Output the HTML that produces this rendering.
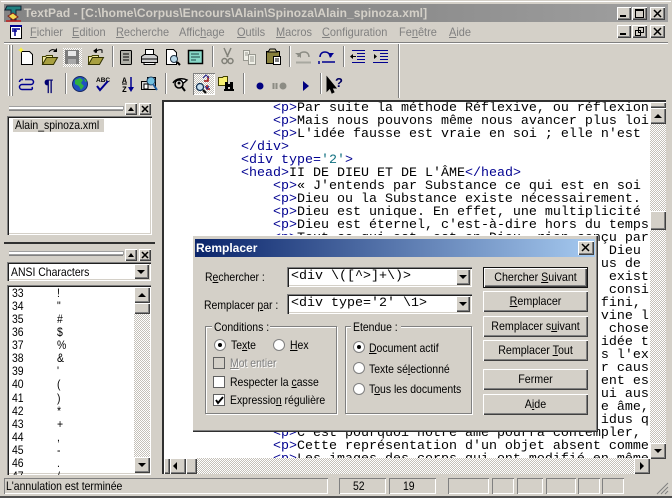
<!DOCTYPE html>
<html><head><meta charset="utf-8"><title>TextPad</title>
<style>
html,body{margin:0;padding:0;background:#d4d0c8}
#w{position:relative;width:672px;height:498px;overflow:hidden;background:#d4d0c8;font:12px/14px "Liberation Sans",sans-serif;color:#000}
#w div,#w span.t{position:absolute}
.t{white-space:pre;transform:scaleX(.87);transform-origin:0 0}
.n{transform:none}
.c{text-align:center;transform:scaleX(.89);transform-origin:50% 0}
.r{box-shadow:inset 1px 1px #fff,inset -1px -1px #404040,inset -2px -2px #808080,inset 2px 2px #d4d0c8;background:#d4d0c8}
.s{box-shadow:inset 1px 1px #808080,inset 2px 2px #202020,inset -1px -1px #fff,inset -2px -2px #d4d0c8;background:#fff}
.p{box-shadow:inset 1px 1px #808080,inset -1px -1px #fff}
.d{background:repeating-conic-gradient(#c4c0b8 0 25%,#fff 0 50%) 0 0/2px 2px}
.m{color:#808080;transform:scaleX(.915)}
.g{border:1px solid #808080;box-shadow:1px 1px #fff,inset 1px 1px #fff}
#e{left:164px;top:102px;width:486px;height:356px;overflow:hidden;background:#fff}
#e pre{position:absolute;left:-3px;top:0;margin:0;font:13.34px/13px "Liberation Mono",monospace;color:#000}
#e b{font-weight:normal;color:#000090}
#e i{font-style:normal;color:#107080}
.lb{background:linear-gradient(90deg,#0a246a,#a6caf0)}
</style></head><body>
<div id="w">
<div style="left:0;top:0;width:672px;height:1px;background:#d4d0c8"></div>
<div style="left:1px;top:1px;width:670px;height:1px;background:#fff"></div>
<div style="left:0;top:496px;width:672px;height:2px;background:#505050"></div>
<div style="left:4px;top:4px;width:664px;height:18px;background:linear-gradient(90deg,#858585,#8c8c8c 60%,#a0a0a0)"></div>
<span class="t n" style="left:24px;top:6px;font-weight:bold;font-size:12px;color:#d4d0c8;letter-spacing:.06px">TextPad - [C:\home\Corpus\Encours\Alain\Spinoza\Alain_spinoza.xml]</span>
<span class="t m" style="left:30px;top:25px"><u>F</u>ichier</span>
<span class="t m" style="left:72px;top:25px"><u>E</u>dition</span>
<span class="t m" style="left:116px;top:25px"><u>R</u>echerche</span>
<span class="t m" style="left:179px;top:25px">Affic<u>h</u>age</span>
<span class="t m" style="left:237px;top:25px"><u>O</u>utils</span>
<span class="t m" style="left:276px;top:25px"><u>M</u>acros</span>
<span class="t m" style="left:322px;top:25px"><u>C</u>onfiguration</span>
<span class="t m" style="left:399px;top:25px">Fe<u>n</u>être</span>
<span class="t m" style="left:449px;top:25px"><u>A</u>ide</span>
<div class="r" style="left:617px;top:7px;width:14px;height:13px"></div>
<div class="r" style="left:632px;top:7px;width:15px;height:13px"></div>
<div class="r" style="left:650px;top:7px;width:15px;height:13px"></div>
<div class="r" style="left:617px;top:25px;width:14px;height:13px"></div>
<div class="r" style="left:632px;top:25px;width:15px;height:13px"></div>
<div class="r" style="left:650px;top:25px;width:15px;height:13px"></div>
<div style="left:4px;top:42px;width:664px;height:1px;background:#808080"></div>
<div style="left:4px;top:43px;width:664px;height:1px;background:#fff"></div>
<div style="left:398px;top:44px;width:1px;height:54px;background:#808080"></div>
<div style="left:399px;top:44px;width:1px;height:54px;background:#fff"></div>
<div class="d" style="left:63px;top:48px;width:19px;height:19px"></div>
<div class="d" style="left:193px;top:73px;width:22px;height:22px;box-shadow:inset 1px 1px #808080,inset -1px -1px #fff"></div>

<div style="left:9px;top:106px;width:114px;height:2px;border:1px solid #a0a0a0;border-left:0;background:#fff"></div>
<div style="left:9px;top:110px;width:114px;height:1px;background:#808080"></div>
<div class="r" style="left:125px;top:103px;width:12px;height:12px"></div>
<div class="r" style="left:139px;top:103px;width:12px;height:12px"></div>
<div class="s" style="left:7px;top:116px;width:145px;height:119px"></div>
<div style="left:13px;top:119px;width:91px;height:13px;background:#d4d0c8"></div>
<span class="t" style="left:15px;top:118px">Alain_spinoza.xml</span>
<div style="left:4px;top:242px;width:151px;height:2px;background:#303030"></div>
<div style="left:9px;top:251px;width:114px;height:2px;border:1px solid #a0a0a0;border-left:0;background:#fff"></div>
<div style="left:9px;top:255px;width:114px;height:1px;background:#808080"></div>
<div class="r" style="left:125px;top:249px;width:12px;height:12px"></div>
<div class="r" style="left:139px;top:249px;width:12px;height:12px"></div>
<div class="s" style="left:7px;top:262px;width:144px;height:19px"></div>
<span class="t" style="left:11px;top:265px">ANSI Characters</span>
<div class="r" style="left:134px;top:264px;width:15px;height:15px"></div>
<div class="s" style="left:7px;top:285px;width:144px;height:190px;overflow:hidden">
<span class="t" style="left:5px;top:2px;line-height:13.07px">33
34
35
36
37
38
39
40
41
42
43
44
45
46
47</span>
<span class="t" style="left:50px;top:2px;line-height:13.07px">!
"
#
$
%
&amp;
'
(
)
*
+
,
-
.
/</span></div>
<div class="d" style="left:134px;top:287px;width:16px;height:186px"></div>
<div class="r" style="left:134px;top:287px;width:16px;height:16px"></div>
<div class="r" style="left:134px;top:303px;width:16px;height:11px"></div>
<div class="r" style="left:134px;top:457px;width:16px;height:16px"></div>

<div style="left:162px;top:100px;width:504px;height:2px;background:#303030"></div>
<div style="left:162px;top:100px;width:2px;height:374px;background:#303030"></div>
<div id="e"><pre>              <b>&lt;p&gt;</b>Par suite la méthode Réflexive, ou réflexion
              <b>&lt;p&gt;</b>Mais nous pouvons même nous avancer plus loi
              <b>&lt;p&gt;</b>L'idée fausse est vraie en soi ; elle n'est
          <b>&lt;/div&gt;</b>
          <b>&lt;div type=</b><i>'2'</i><b>&gt;</b>
          <b>&lt;head&gt;</b>II DE DIEU ET DE L'ÂME<b>&lt;/head&gt;</b>
              <b>&lt;p&gt;</b>« J'entends par Substance ce qui est en soi (
              <b>&lt;p&gt;</b>Dieu ou la Substance existe nécessairement. I
              <b>&lt;p&gt;</b>Dieu est unique. En effet, une multiplicité (
              <b>&lt;p&gt;</b>Dieu est éternel, c'est-à-dire hors du temps
              <b>&lt;p&gt;</b>Tout ce qui est, est en Dieu, rien conçu par
                                                        Dieu (
                                                       us de (
                                                        exist
                                                        consi(
                                                       fini,
                                                       vine l(
                                                        chose
                                                       idée t
                                                       s l'ex
                                                       r caus
                                                       ent es
                                                       ui aus
                                                       e âme,
                                                       idus q
              <b>&lt;p&gt;</b>C'est pourquoi notre âme pourra contempler, (
              <b>&lt;p&gt;</b>Cette représentation d'un objet absent comme
              <b>&lt;p&gt;</b>Les images des corps qui ont modifié en même</pre></div>
<div class="d" style="left:650px;top:102px;width:16px;height:357px"></div>
<div class="r" style="left:650px;top:102px;width:16px;height:6px"></div>
<div class="r" style="left:650px;top:108px;width:16px;height:16px"></div>
<div class="r" style="left:650px;top:211px;width:16px;height:19px"></div>
<div class="r" style="left:650px;top:443px;width:16px;height:16px"></div>
<div class="d" style="left:164px;top:458px;width:486px;height:16px"></div>
<div class="r" style="left:164px;top:458px;width:6px;height:16px"></div>
<div class="r" style="left:170px;top:458px;width:16px;height:16px"></div>
<div class="r" style="left:186px;top:458px;width:11px;height:16px"></div>
<div class="r" style="left:634px;top:458px;width:16px;height:16px"></div>

<div class="p" style="left:4px;top:478px;width:324px;height:16px"></div>
<span class="t" style="left:6px;top:479px">L'annulation est terminée</span>
<div class="p" style="left:339px;top:478px;width:47px;height:16px"></div>
<div class="p" style="left:389px;top:478px;width:47px;height:16px"></div>
<span class="t" style="left:353px;top:479px">52</span>
<span class="t" style="left:403px;top:479px">19</span>
<div class="p" style="left:448px;top:478px;width:41px;height:16px"></div>
<div class="p" style="left:492px;top:478px;width:22px;height:16px"></div>
<div class="p" style="left:517px;top:478px;width:26px;height:16px"></div>
<div class="p" style="left:546px;top:478px;width:30px;height:16px"></div>
<div class="p" style="left:578px;top:478px;width:22px;height:16px"></div>
<div class="p" style="left:602px;top:478px;width:22px;height:16px"></div>

<!-- dialog -->
<div style="left:192px;top:235px;width:406px;height:197px;background:#d4d0c8;box-shadow:inset 1px 1px #fff,inset -1px -1px #303030,inset -2px -2px #808080"></div>
<div class="lb" style="left:195px;top:239px;width:400px;height:18px"></div>
<span class="t n" style="left:196px;top:241px;color:#fff;font-weight:bold;font-size:12px">Remplacer</span>
<div class="r" style="left:578px;top:241px;width:16px;height:14px"></div>
<span class="t" style="left:205px;top:270px">R<u>e</u>chercher :</span>
<span class="t" style="left:204px;top:298px">Remplacer <u>p</u>ar :</span>
<div class="s" style="left:287px;top:267px;width:185px;height:20px"></div>
<div class="s" style="left:287px;top:294px;width:185px;height:20px"></div>
<span class="t n" style="left:291px;top:270px;font:13.34px/14px 'Liberation Mono',monospace">&lt;div \([^&gt;]+\)&gt;</span>
<span class="t n" style="left:291px;top:297px;font:13.34px/14px 'Liberation Mono',monospace">&lt;div type='2' \1&gt;</span>
<div class="r" style="left:456px;top:269px;width:14px;height:16px"></div>
<div class="r" style="left:456px;top:296px;width:14px;height:16px"></div>

<div class="g" style="left:205px;top:326px;width:130px;height:86px"></div>
<div style="left:212px;top:322px;width:58px;height:8px;background:#d4d0c8"></div>
<span class="t" style="left:214px;top:320px">Conditions :</span>
<div class="g" style="left:345px;top:326px;width:125px;height:86px"></div>
<div style="left:351px;top:322px;width:50px;height:8px;background:#d4d0c8"></div>
<span class="t" style="left:353px;top:320px">Etendue :</span>
<span class="t" style="left:231px;top:338px">Te<u>x</u>te</span>
<span class="t" style="left:290px;top:338px"><u>H</u>ex</span>
<span class="t" style="left:230px;top:356px;color:#808080;text-shadow:1px 1px #fff"><u>M</u>ot entier</span>
<span class="t" style="left:230px;top:375px">Respecter la <u>c</u>asse</span>
<span class="t" style="left:230px;top:393px">Expressio<u>n</u> régulière</span>
<span class="t" style="left:369px;top:341px"><u>D</u>ocument actif</span>
<span class="t" style="left:369px;top:362px">Texte sé<u>l</u>ectionné</span>
<span class="t" style="left:369px;top:382px">T<u>o</u>us les documents</span>

<div style="left:483px;top:267px;width:105px;height:21px;background:#111"></div>
<div class="r" style="left:484px;top:268px;width:103px;height:19px"></div>
<div class="r" style="left:483px;top:291px;width:105px;height:21px"></div>
<div class="r" style="left:483px;top:316px;width:105px;height:21px"></div>
<div class="r" style="left:483px;top:340px;width:105px;height:21px"></div>
<div class="r" style="left:483px;top:369px;width:105px;height:21px"></div>
<div class="r" style="left:483px;top:394px;width:105px;height:21px"></div>
<div class="c" style="left:483px;top:270px;width:105px">Chercher <u>S</u>uivant</div>
<div class="c" style="left:483px;top:294px;width:105px"><u>R</u>emplacer</div>
<div class="c" style="left:483px;top:319px;width:105px">Remplacer s<u>u</u>ivant</div>
<div class="c" style="left:483px;top:343px;width:105px">Remplacer <u>T</u>out</div>
<div class="c" style="left:483px;top:372px;width:105px">Fermer</div>
<div class="c" style="left:483px;top:397px;width:105px">A<u>i</u>de</div>

<svg style="position:absolute;left:0;top:0" width="672" height="498" viewBox="0 0 672 498">
<!-- app icon -->
<path d="M7 6h14v4h-5v10h-5v-10h-6z" fill="#208080" stroke="#102030"/><path d="M8 16l5-3 5 4-5 3z" fill="#f0d850" stroke="#802020"/><path d="M6 21h15" stroke="#c02020" stroke-width="1.5"/>
<!-- doc icon in menu -->
<path d="M10.500 25.500h11v13h-11z" fill="#fff" stroke="#000"/><path d="M10 25h12v2H10z" fill="#000090"/><path d="M12 29h8M12 31h5M15 29v7" stroke="#000090" stroke-width="1.500"/>
<!-- window btn glyphs -->
<path d="M620 16h6M620 34h6" stroke="#000" stroke-width="2"/>
<rect x="635.500" y="9.500" width="8" height="8" fill="none" stroke="#000"/><path d="M635 10h9" stroke="#000" stroke-width="2"/>
<path d="M654 10l7 7M661 10l-7 7M654 28l7 7M661 28l-7 7" stroke="#000" stroke-width="1.500"/>
<path d="M638.500 27.500h5v5h-5zM635.500 30.500h5v5h-5z" fill="#d4d0c8" stroke="#000"/>
<!-- grippers -->
<path d="M8.500 45v51M11.500 45v51" stroke="#fff"/><path d="M9.500 45v51M12.500 45v51" stroke="#808080"/>
<path d="M112.500 46v21M212.500 46v21M289.500 46v21M343.500 46v21M65.500 73v21M165.500 73v21M243.500 73v21M320.500 73v21" stroke="#808080"/>
<path d="M113.500 46v21M213.500 46v21M290.500 46v21M344.500 46v21M66.500 73v21M166.500 73v21M244.500 73v21M321.500 73v21" stroke="#fff"/>
<!-- new -->
<path d="M21.500 51.500h8l3 3v10h-11z" fill="#fff" stroke="#000"/><path d="M21 47l1 2 2 1-2 1-1 2-1-2-2-1 2-1z" fill="#f8f040"/>
<!-- open -->
<path d="M42.500 64.500v-8h3l1-1h6v2" fill="#f0e8a0" stroke="#404000"/><path d="M42.500 64.500l4-7h11l-4 7z" fill="#a8a040" stroke="#303000"/><path d="M49 52c2-3 5-3 7-1" fill="none" stroke="#000"/><path d="M57 48v4h-4z" fill="#000"/>
<!-- save -->
<rect x="65" y="50" width="14" height="14" fill="#7c7c7c"/><rect x="68" y="51" width="8" height="5" fill="#e8e8e8"/><rect x="68" y="59" width="8" height="5" fill="#a8a8a8"/>
<!-- open 2 -->
<path d="M88.500 64.500v-8h3l1-1h6v2" fill="#f0e8a0" stroke="#404000"/><path d="M88.500 64.500l4-7h11l-4 7z" fill="#a8a040" stroke="#303000"/><path d="M95 53c1-3 5-4 7-3v3" fill="none" stroke="#000"/><path d="M93 51l4-3v5z" fill="#000"/>
<!-- doc stack -->
<rect x="120.500" y="50.500" width="11" height="14" rx="1" fill="#b0b0a8" stroke="#000"/><path d="M123 54h6M123 57h6M123 60h6" stroke="#000"/>
<!-- print -->
<path d="M145.500 49.500h8v5h-8z" fill="#fff" stroke="#000"/><path d="M141.500 56.500l3-2h10l3 2v6h-16z" fill="#d0d0d0" stroke="#000"/><path d="M142 59h15" stroke="#000"/><path d="M144 62.500h11v2h-11z" fill="#fff" stroke="#000"/>
<!-- preview -->
<path d="M166.500 49.500h7l3 3v12h-10z" fill="#fff" stroke="#000"/><circle cx="174" cy="59" r="3.500" fill="#b8d8e8" stroke="#203040"/><path d="M177 62l3 3" stroke="#000" stroke-width="2"/>
<!-- view -->
<rect x="188.500" y="50.500" width="14" height="13" fill="#88d8c8" stroke="#000" stroke-width="1.500"/><path d="M191 54h8M191 57h9M191 60h5" stroke="#204848"/>
<!-- cut -->
<path d="M224 48l4 9M231 48l-4 9" stroke="#808078" stroke-width="1.500"/><circle cx="224.500" cy="61" r="2.500" fill="none" stroke="#808078" stroke-width="1.500"/><circle cx="230.500" cy="61" r="2.500" fill="none" stroke="#808078" stroke-width="1.500"/>
<!-- copy -->
<path d="M243.500 50.500h6v10h-6z" fill="#f0f0e8" stroke="#989890"/><path d="M248.500 54.500h7v10h-7z" fill="#f0f0e8" stroke="#989890"/><path d="M250 57h4M250 59h4M250 61h4M245 53h3M245 55h3" stroke="#989890"/>
<!-- paste -->
<path d="M266.500 51.500h13v12h-13z" fill="#88803c" stroke="#000"/><path d="M270 49h5l2 3h-9z" fill="#c8c090" stroke="#000"/><path d="M273.500 56.500h7v8h-7z" fill="#fff" stroke="#000"/><path d="M275 59h4M275 61h4" stroke="#000"/>
<!-- undo/redo -->
<path d="M298 57c1-4 4-5 6-5 4 0 5 3 5 5" fill="none" stroke="#8c8c84" stroke-width="1.500"/><path d="M295 53h6v5z" fill="#8c8c84"/><path d="M296 62.500h15" stroke="#a8a8a0" stroke-width="2"/>
<path d="M320 57c0-3 2-5 5-5 3 0 5 2 6 5" fill="none" stroke="#000090" stroke-width="1.500"/><path d="M334 53h-6l2 5z" fill="#000090"/><path d="M319 61v3M322 62h13" stroke="#000090" stroke-width="1.500"/>
<!-- indent -->
<path d="M352 50.500h13M357 53.500h8M357 56.500h8M357 59.500h8M352 62.500h13" stroke="#000090"/><path d="M350 56.500l3-2.500v5z" fill="#000"/><path d="M353 56.500h3" stroke="#000"/>
<path d="M373 50.500h15M380 53.500h8M380 56.500h8M380 59.500h8M373 62.500h15" stroke="#000090"/><path d="M377 56.500l-3-2.500v5z" fill="#000"/>
<!-- wrap -->
<path d="M25 79.500h6a2.500 2.500 0 0 1 0 5h-9a2.500 2.500 0 0 0 0 5h10M19.500 82a2.500 2.500 0 0 1 2.500-2.500h1M32 87a2.500 2.500 0 0 1 0 2.500" fill="none" stroke="#000090" stroke-width="1.500"/>
<!-- pilcrow -->
<text x="44" y="91" font-family="Liberation Sans" font-weight="bold" font-size="17" fill="#000070">¶</text>
<!-- globe -->
<circle cx="80" cy="84" r="7.500" fill="#2050c0" stroke="#182860"/><path d="M75 80l5-2 3 2-2 3 3 3-3 4-2-4-4-2z" fill="#30b040"/><path d="M84 78l3 3-2 1z" fill="#30b040"/>
<!-- spell -->
<text x="96" y="82" font-family="Liberation Sans" font-weight="bold" font-size="6.500" fill="#000">ABC</text><path d="M97 86l3 4 8-9" fill="none" stroke="#000090" stroke-width="2"/>
<!-- sort -->
<text x="122" y="83" font-family="Liberation Mono" font-weight="bold" font-size="8" fill="#000">A</text><text x="122" y="92" font-family="Liberation Mono" font-weight="bold" font-size="8" fill="#000">Z</text><path d="M122 84h5" stroke="#000"/><path d="M131 77v11" stroke="#000090" stroke-width="1.500"/><path d="M128 87h6l-3 5z" fill="#000090"/>
<!-- find in docs -->
<path d="M141.500 81.500h6v-4h8v12h-14z" fill="#d8d8d8" stroke="#000"/><circle cx="151" cy="81" r="4" fill="#70c0e0" stroke="#204060"/><path d="M153 84l4 6" stroke="#2060a0" stroke-width="2"/><rect x="144" y="84" width="4" height="5" fill="#fff" stroke="#000"/>
<!-- eye -->
<path d="M173 83c3-5 10-5 14-3-2 2-3 3-4 3" fill="#fff" stroke="#000" stroke-width="1.500"/><circle cx="179" cy="84" r="4" fill="none" stroke="#000" stroke-width="1.500"/><circle cx="179" cy="83" r="1.500"/><path d="M182 87l3 4" stroke="#000" stroke-width="2"/>
<!-- replace -->
<circle cx="200" cy="87" r="3.500" fill="#c8e0f0" stroke="#103050" stroke-width="1.200"/><path d="M203 90l3 3" stroke="#000" stroke-width="2"/><path d="M208 76v5h-4M207 85v4h3" fill="none" stroke="#a01010" stroke-width="1.500"/><path d="M209 78l-3-3-3 3M205 86l2 3 2-3" fill="none" stroke="#202090"/>
<!-- binoc -->
<path d="M218.500 77.500h4l1-1h4v9h-9z" fill="#f8f070" stroke="#404000"/><path d="M225 82h3v8h-3zM230 82h3v8h-3zM228 84h2v3h-2z" fill="#000"/><path d="M224 90h5M229 90h5" stroke="#000" stroke-width="2"/>
<!-- macro -->
<circle cx="260" cy="86" r="3.500" fill="#000080"/>
<path d="M273.500 83v6M276.500 83v6" stroke="#8c8c84" stroke-width="2"/><circle cx="283" cy="86" r="3.500" fill="#8c8c84"/>
<path d="M303 81l6 5-6 5z" fill="#000080"/>
<!-- help -->
<path d="M327 77v14l3-3 2 5 2-1-2-4h4z" fill="#000" stroke="#000"/><text x="335" y="87" font-family="Liberation Sans" font-weight="bold" font-size="13" fill="#000060">?</text>
<!-- panel buttons -->
<path d="M128 111h6l-3-4zM128 257h6l-3-4z" fill="#000"/>
<path d="M142 106l6 6M148 106l-6 6M142 252l6 6M148 252l-6 6" stroke="#000" stroke-width="1.500"/>
<!-- combo arrows, scroll arrows -->
<path d="M137 270h8l-4 4z" fill="#000"/>
<path d="M138 297h8l-4-4zM138 463h8l-4 4zM654 118h8l-4-4zM654 449h8l-4 4zM177 462v8l-4-4zM640 462v8l4-4zM459 275h8l-4 4zM459 302h8l-4 4z" fill="#000"/>
<!-- close dialog -->
<path d="M582 244l7 7M589 244l-7 7" stroke="#000" stroke-width="1.500"/>
<!-- radios -->
<g fill="#fff" stroke="#808080"><circle cx="220" cy="345" r="5.500"/><circle cx="279" cy="345" r="5.500"/><circle cx="359" cy="347" r="5.500"/><circle cx="359" cy="368" r="5.500"/><circle cx="359" cy="389" r="5.500"/></g>
<circle cx="220" cy="345" r="2"/><circle cx="359" cy="347" r="2"/>
<!-- checks -->
<rect x="213.500" y="357.500" width="11" height="11" fill="#d4d0c8" stroke="#606060"/>
<rect x="213.500" y="376.500" width="11" height="11" fill="#fff" stroke="#606060"/>
<rect x="213.500" y="394.500" width="11" height="11" fill="#fff" stroke="#606060"/>
<path d="M216 400l2 3 5-6" fill="none" stroke="#000" stroke-width="2"/>
<!-- grip -->
<path d="M657 494l11-11M661 494l7-7M665 494l3-3" stroke="#808080"/>
</svg>
</div>
</body></html>
